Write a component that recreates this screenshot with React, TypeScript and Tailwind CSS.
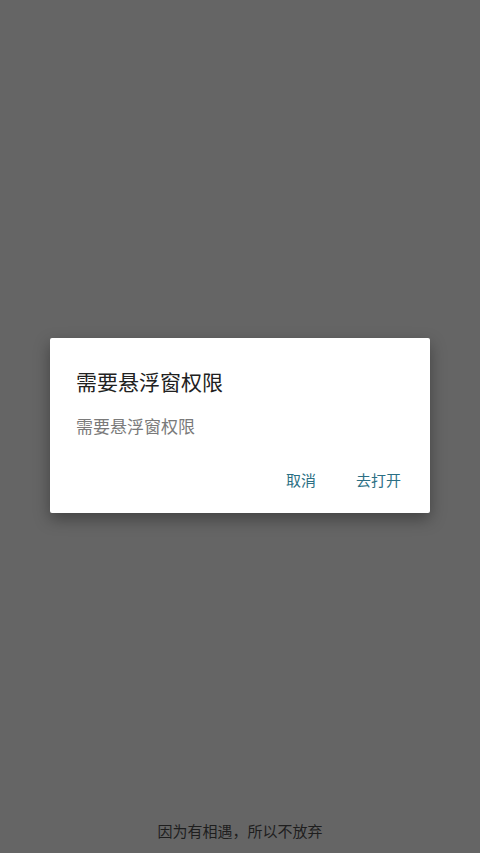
export default function App() {
  return (
    <div
      className="flex h-[853px] w-[480px] flex-col bg-[#656565]"
      style={{ fontFamily: '"Noto Sans CJK SC", "Noto Sans", sans-serif' }}
    >
      <div className="flex flex-1 items-center justify-center pt-[30px]">
        <div className="h-[175px] w-[380px] rounded-[2px] bg-white px-[26px] shadow-[0_6px_16px_rgba(0,0,0,0.35)]">
          <h2 className="mt-[30px] text-[21px] leading-[26px] text-[#212121]">需要悬浮窗权限</h2>
          <p className="mt-[21px] text-[17px] leading-[22px] text-[#7a7a7a]">需要悬浮窗权限</p>
          <div className="mt-[33px] flex justify-end gap-[40px] pr-[3px]">
            <button className="text-[15px] leading-[20px] text-[#2c6f84]">取消</button>
            <button className="text-[15px] leading-[20px] text-[#2c6f84]">去打开</button>
          </div>
        </div>
      </div>
      <div className="pb-[12px] text-center text-[15px] leading-[20px] text-[#1e1e1e]">
        因为有相遇，所以不放弃
      </div>
    </div>
  )
}
